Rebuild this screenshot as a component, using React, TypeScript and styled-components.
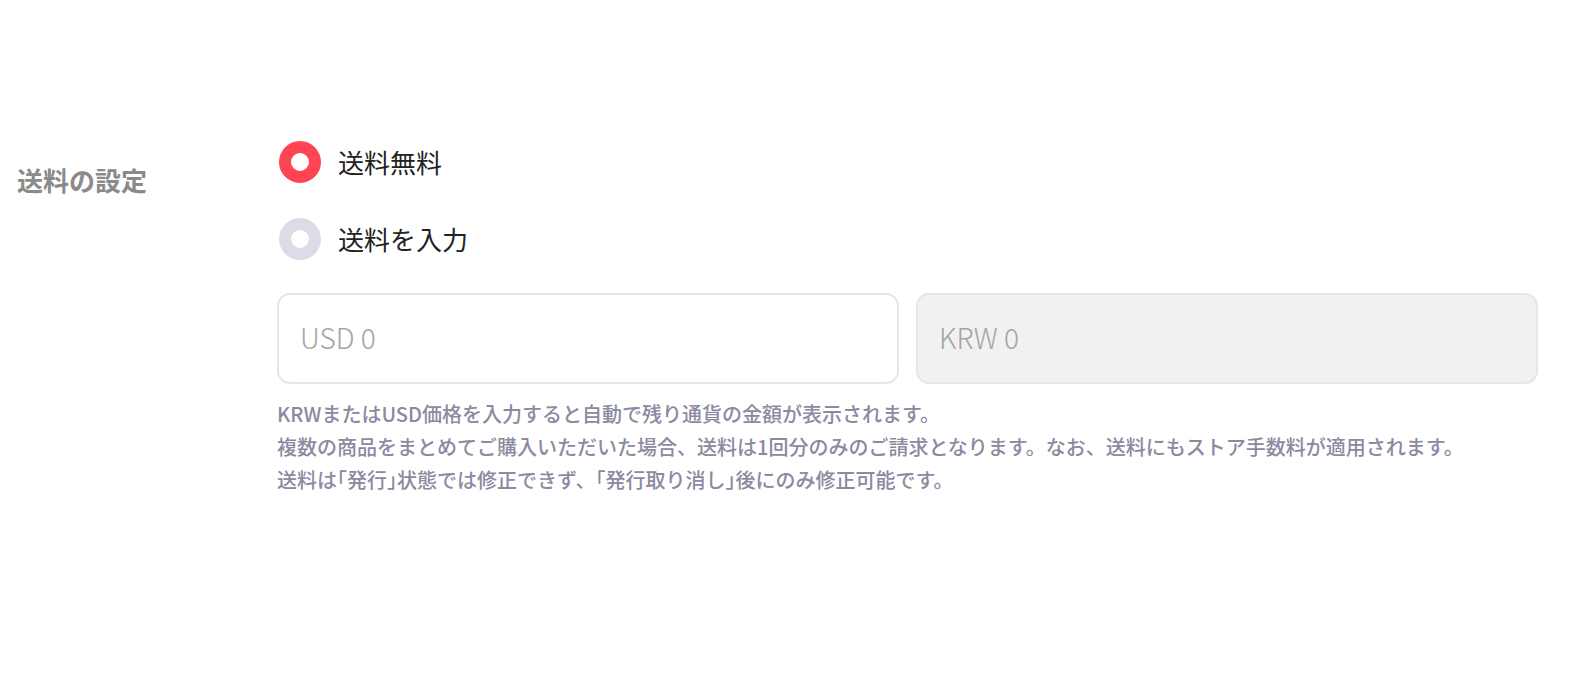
import React, { FC, useState } from "react";
import styled, { createGlobalStyle } from "styled-components";

const GlobalStyle = createGlobalStyle`
  html, body {
    margin: 0;
    padding: 0;
    background: #ffffff;
  }
  body {
    font-family: "Noto Sans CJK JP", "Noto Sans", sans-serif;
  }
  * {
    box-sizing: border-box;
  }
`;

const Page = styled.div`
  width: 1580px;
  height: 698px;
  padding: 141px 42px 0 17px;
`;

const FieldRow = styled.section`
  display: grid;
  grid-template-columns: 260px 1fr;
`;

const FieldLabel = styled.h3`
  margin: 20px 0 0;
  font-size: 26px;
  line-height: 38px;
  font-weight: 700;
  color: #8a8a8a;
`;

const FieldBody = styled.div`
  display: flex;
  flex-direction: column;
`;

const RadioGroup = styled.div`
  display: flex;
  flex-direction: column;
  gap: 35px;
  padding-left: 2px;
`;

const RadioOption = styled.label`
  display: flex;
  align-items: center;
  gap: 17px;
  height: 42px;
  cursor: pointer;
`;

const RadioDot = styled.span<{ $checked: boolean }>`
  width: 42px;
  height: 42px;
  border-radius: 50%;
  border: 12.5px solid ${(p) => (p.$checked ? "#ff4553" : "#dcdce7")};
  background: #ffffff;
  flex-shrink: 0;
`;

const RadioText = styled.span`
  font-size: 26px;
  line-height: 38px;
  color: #222222;
`;

const PriceInputs = styled.div`
  display: grid;
  grid-template-columns: 1fr 1fr;
  gap: 17px;
  margin-top: 33px;
`;

const PriceInput = styled.input<{ $disabled?: boolean }>`
  height: 91px;
  width: 100%;
  border: 2px solid #e6e6e6;
  border-radius: 13px;
  padding: 0 21px 4px;
  font-family: "Noto Sans CJK JP", "Noto Sans", sans-serif;
  font-size: 28px;
  font-weight: 300;
  color: #222222;
  background: ${(p) => (p.$disabled ? "#f1f1f1" : "#ffffff")};
  outline: none;

  &::placeholder {
    color: #a4a4a4;
  }
`;

const HelpText = styled.div`
  margin-top: 13px;
  font-size: 20px;
  line-height: 33px;
  font-weight: 500;
  color: #8a8aa0;
`;

// corner brackets are set half-width in the original
const Bracket = styled.span`
  font-feature-settings: "halt";
`;

const options = ["送料無料", "送料を入力"];

const App: FC = () => {
  const [selected, setSelected] = useState(0);

  return (
    <>
      <GlobalStyle />
      <Page>
        <FieldRow>
          <FieldLabel>送料の設定</FieldLabel>
          <FieldBody>
            <RadioGroup>
              {options.map((label, i) => (
                <RadioOption key={label} onClick={() => setSelected(i)}>
                  <RadioDot $checked={selected === i} />
                  <RadioText>{label}</RadioText>
                </RadioOption>
              ))}
            </RadioGroup>
            <PriceInputs>
              <PriceInput placeholder="USD 0" />
              <PriceInput placeholder="KRW 0" $disabled disabled />
            </PriceInputs>
            <HelpText>
              <div>KRWまたはUSD価格を入力すると自動で残り通貨の金額が表示されます。</div>
              <div>
                複数の商品をまとめてご購入いただいた場合、送料は1回分のみのご請求となります。なお、送料にもストア手数料が適用されます。
              </div>
              <div>
                送料は<Bracket>「</Bracket>発行<Bracket>」</Bracket>状態では修正できず、
                <Bracket>「</Bracket>発行取り消し<Bracket>」</Bracket>後にのみ修正可能です。
              </div>
            </HelpText>
          </FieldBody>
        </FieldRow>
      </Page>
    </>
  );
};

export default App;
